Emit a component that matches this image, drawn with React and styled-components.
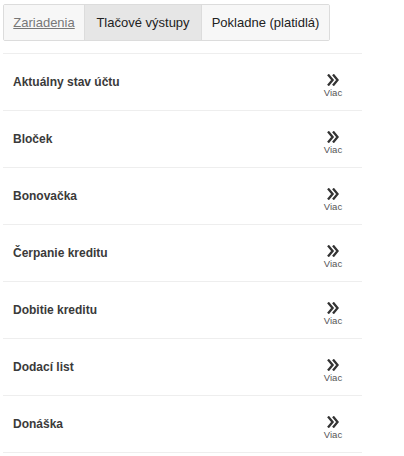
import React from "react";
import styled, { createGlobalStyle } from "styled-components";

const GlobalStyle = createGlobalStyle`
    body {
        margin: 0;
        background: #fff;
        font-family: "Liberation Sans", Arial, sans-serif;
        color: #333;
    }
`;

const Page = styled.div`
    width: 404px;
    padding: 4px 0 0 3px;
    box-sizing: border-box;
`;

const Tabs = styled.div`
    display: flex;
    width: max-content;
    border: 1px solid #dcdcdc;
    border-radius: 2px;
    overflow: hidden;
`;

const Tab = styled.div`
    width: ${(p) => p.$w}px;
    height: 35px;
    display: flex;
    align-items: center;
    justify-content: center;
    font-size: 13px;
    background: ${(p) => (p.$active ? "#e6e6e6" : "#f7f7f7")};
    color: ${(p) => (p.$link ? "#777" : "#222")};
    text-decoration: ${(p) => (p.$link ? "underline" : "none")};
    & + & {
        border-left: 1px solid #dcdcdc;
    }
`;

const List = styled.div`
    width: 359px;
    margin-top: 12px;
    border-top: 1px solid #eeeeee;
`;

const Row = styled.div`
    height: 56px;
    display: flex;
    align-items: center;
    justify-content: space-between;
    border-bottom: 1px solid #eeeeee;
    padding: 0 19px 0 10px;
`;

const Title = styled.span`
    font-size: 12px;
    font-weight: bold;
    color: #3a3a3a;
`;

const More = styled.div`
    display: flex;
    flex-direction: column;
    align-items: center;
    margin-top: 7px;
    width: 20px;
`;

const MoreLabel = styled.span`
    font-size: 9.5px;
    color: #555;
    margin-top: 1px;
`;

const Chevrons = () => (
    <svg width="12" height="12" viewBox="0 0 12 12">
        <path d="M1 0.5 L5.6 6 L1 11.5" fill="none" stroke="#333" strokeWidth="2.3" />
        <path d="M6 0.5 L10.6 6 L6 11.5" fill="none" stroke="#333" strokeWidth="2.3" />
    </svg>
);

const items = [
    "Aktuálny stav účtu",
    "Bloček",
    "Bonovačka",
    "Čerpanie kreditu",
    "Dobitie kreditu",
    "Dodací list",
    "Donáška",
];

export default function App() {
    return (
        <Page>
            <GlobalStyle />
            <Tabs>
                <Tab $link $w={80}>Zariadenia</Tab>
                <Tab $active $w={116}>Tlačové výstupy</Tab>
                <Tab $w={127}>Pokladne (platidlá)</Tab>
            </Tabs>
            <List>
                {items.map((item) => (
                    <Row key={item}>
                        <Title>{item}</Title>
                        <More>
                            <Chevrons />
                            <MoreLabel>Viac</MoreLabel>
                        </More>
                    </Row>
                ))}
            </List>
        </Page>
    );
}
